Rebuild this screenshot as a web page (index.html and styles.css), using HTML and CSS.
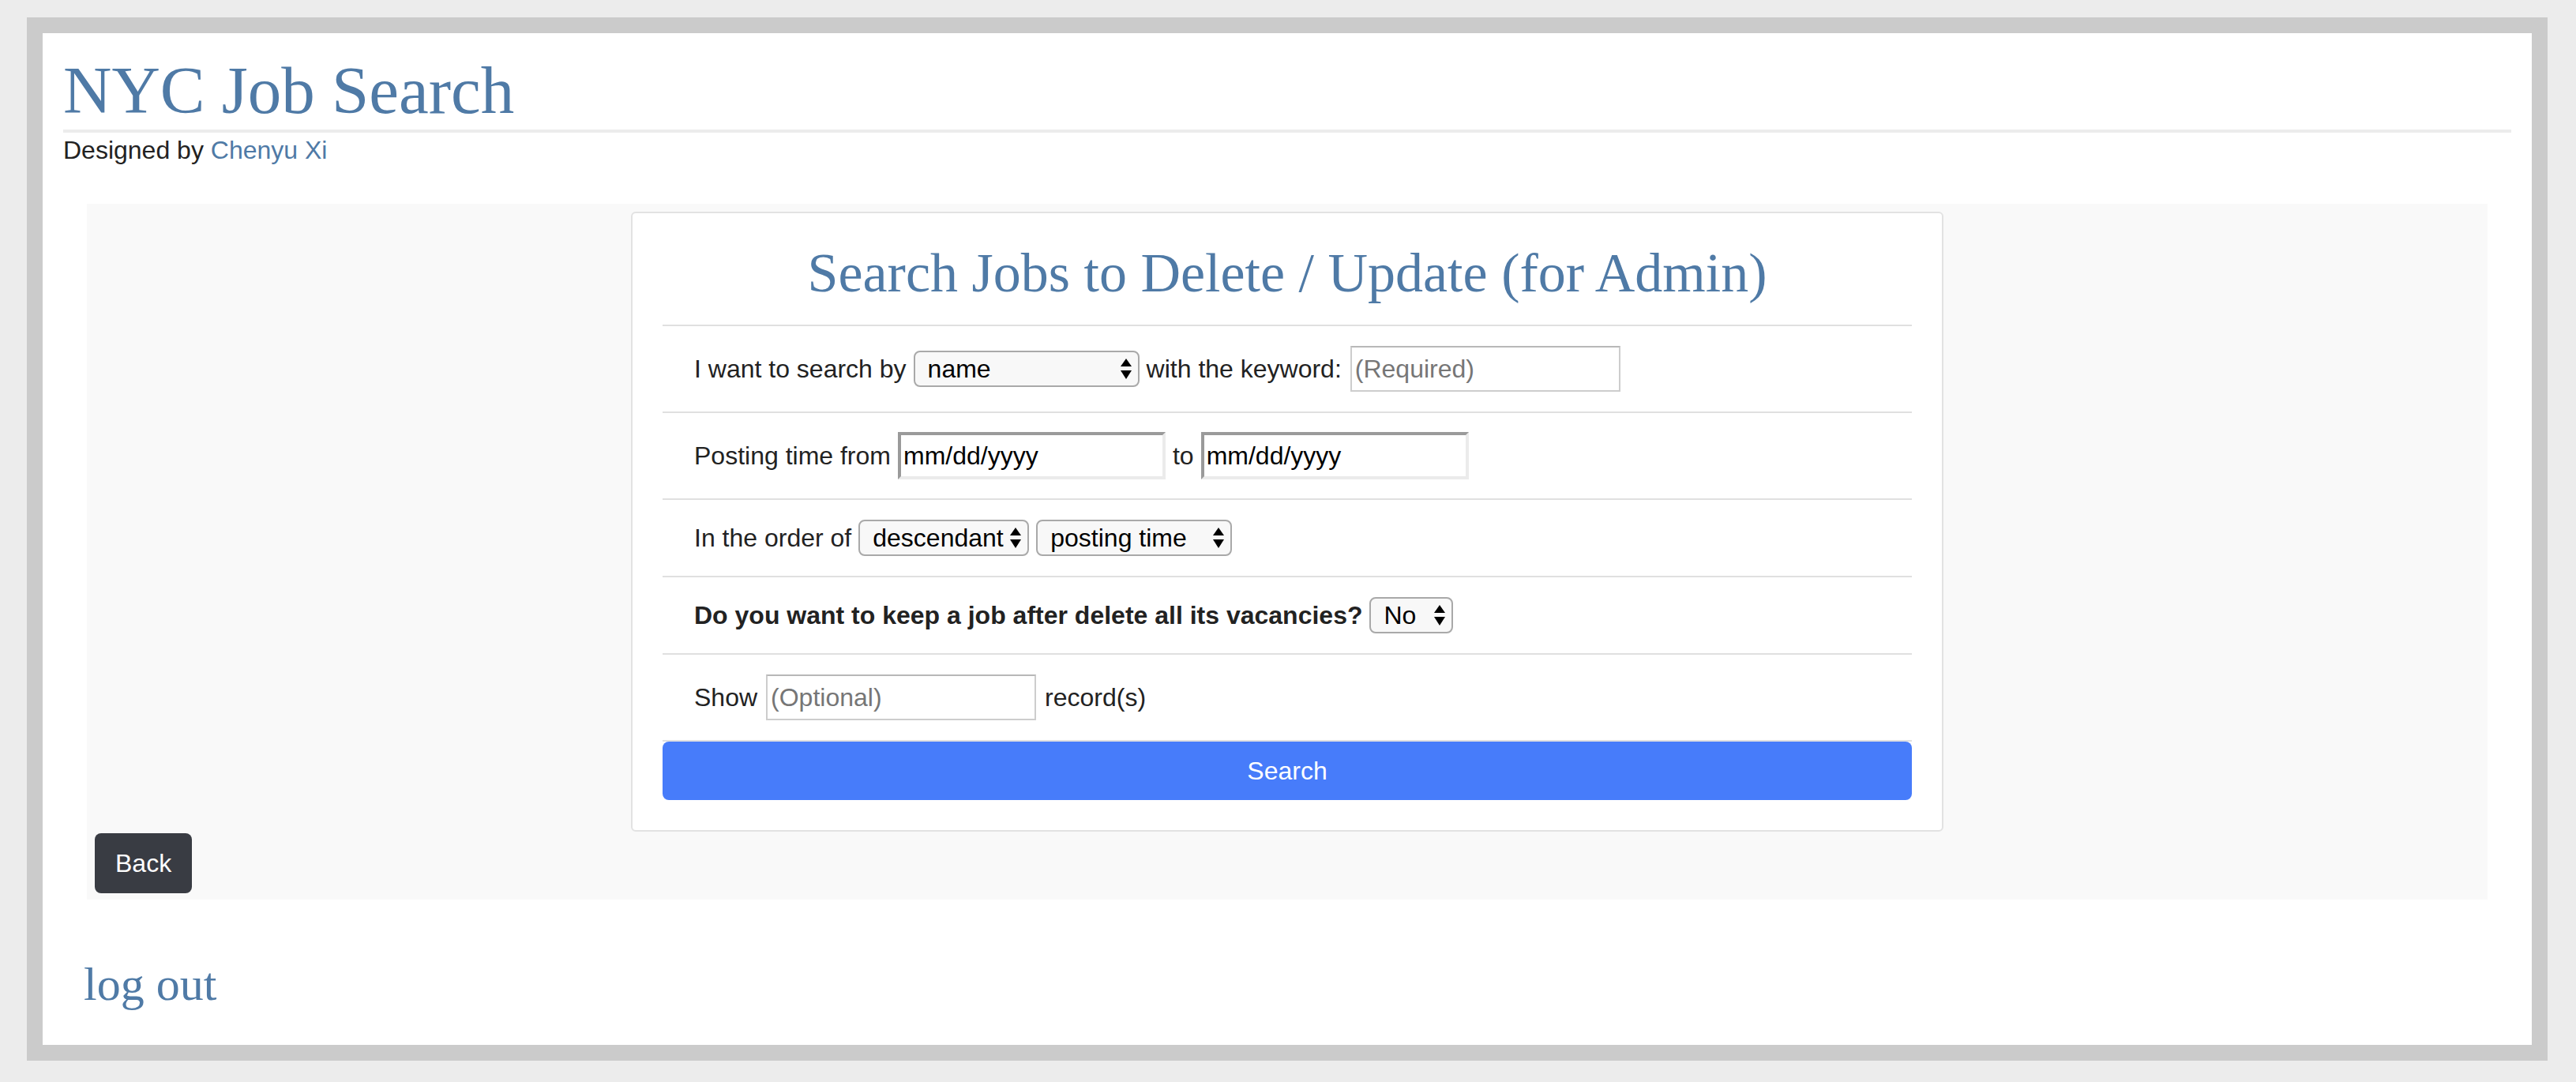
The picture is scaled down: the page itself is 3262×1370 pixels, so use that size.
FILE: index.html
```html
<!DOCTYPE html>
<html lang="en">
<head>
<meta charset="utf-8">
<title>NYC Job Search</title>
<link rel="stylesheet" href="styles.css">
</head>
<body>
<div class="frame">
  <header class="head">
    <h1 class="site-title">NYC Job Search</h1>
    <p class="byline">Designed by <a href="#" class="link">Chenyu Xi</a></p>
  </header>
  <main class="panel">
    <form class="card">
      <h2 class="card-title">Search Jobs to Delete / Update (for Admin)</h2>
      <div class="row">
        <span>I want to search by</span>
        <span class="sel sel-name"><select><option>name</option></select><svg class="arr" viewBox="0 0 14 26" width="14" height="26"><polygon points="7,0 14,10 0,10"/><polygon points="0,15 14,15 7,26"/></svg></span>
        <span>with the keyword:</span>
        <input class="txt" type="text" placeholder="(Required)">
      </div>
      <div class="row row-dates">
        <span>Posting time from</span>
        <input class="date" type="text" value="mm/dd/yyyy">
        <span>to</span>
        <input class="date" type="text" value="mm/dd/yyyy">
      </div>
      <div class="row">
        <span>In the order of</span>
        <span class="sel sel-dir"><select><option>descendant</option></select><svg class="arr" viewBox="0 0 14 26" width="14" height="26"><polygon points="7,0 14,10 0,10"/><polygon points="0,15 14,15 7,26"/></svg></span>
        <span class="sel sel-by"><select><option>posting time</option></select><svg class="arr" viewBox="0 0 14 26" width="14" height="26"><polygon points="7,0 14,10 0,10"/><polygon points="0,15 14,15 7,26"/></svg></span>
      </div>
      <div class="row">
        <strong>Do you want to keep a job after delete all its vacancies?</strong>
        <span class="sel sel-yn"><select><option>No</option></select><svg class="arr" viewBox="0 0 14 26" width="14" height="26"><polygon points="7,0 14,10 0,10"/><polygon points="0,15 14,15 7,26"/></svg></span>
      </div>
      <div class="row">
        <span>Show</span>
        <input class="txt" type="text" placeholder="(Optional)">
        <span>record(s)</span>
      </div>
      <button type="button" class="btn-search">Search</button>
    </form>
    <button type="button" class="btn-back">Back</button>
  </main>
  <a href="#" class="logout">log out</a>
</div>
</body>
</html>
```

FILE: styles.css
```css
html, body {
  margin: 0;
  padding: 0;
}
body {
  background: #ececec;
  font-family: "Liberation Sans", Arial, sans-serif;
  color: #222;
}
.frame {
  box-sizing: border-box;
  width: 3192px;
  margin: 22px 0 0 34px;
  border: 20px solid #cbcbcb;
  background: #fff;
  padding: 23px 26px 42px;
}
.site-title {
  margin: 0;
  font-family: "Liberation Serif", "Times New Roman", serif;
  font-weight: normal;
  font-size: 85px;
  line-height: 99px;
  color: #4f7aa6;
  border-bottom: 4px solid #ececec;
}
.byline {
  margin: 4px 0 0;
  font-size: 32px;
  line-height: 36px;
}
.link {
  color: #4f7aa6;
  text-decoration: none;
}
.panel {
  margin: 50px 30px 0;
  background: #f9f9f9;
  padding: 10px 10px 8px;
}
.card {
  box-sizing: border-box;
  width: 1662px;
  margin: 0 auto;
  background: #fff;
  border: 2px solid #e2e2e2;
  border-radius: 6px;
  padding: 0 38px 38px;
}
.card-title {
  margin: 0;
  padding: 36px 0 25px;
  text-align: center;
  font-family: "Liberation Serif", "Times New Roman", serif;
  font-weight: normal;
  font-size: 70px;
  line-height: 80px;
  color: #4f7aa6;
  border-bottom: 2px solid #e0e0e0;
}
.row {
  display: flex;
  align-items: center;
  gap: 9px;
  padding: 25px 40px;
  border-bottom: 2px solid #e0e0e0;
  font-size: 32px;
  line-height: 42px;
}
.row-dates {
  padding: 24px 40px;
}
.row strong {
  font-weight: bold;
}
.txt {
  box-sizing: border-box;
  width: 342px;
  height: 58px;
  margin: 0 2px;
  border: 2px solid #cdcdcd;
  border-top-color: #b8b8b8;
  padding: 0 4px;
  font: 32px "Liberation Sans", Arial, sans-serif;
  color: #000;
  background: #fff;
  outline: none;
}
.txt::placeholder {
  color: #767676;
}
.date {
  box-sizing: border-box;
  width: 339px;
  height: 60px;
  border-style: solid;
  border-width: 4px;
  border-color: #9a9a9a #ebebeb #ebebeb #9a9a9a;
  padding: 0 3px;
  font: 32px "Liberation Sans", Arial, sans-serif;
  color: #000;
  background: #fff;
  outline: none;
}
.sel {
  position: relative;
  display: inline-block;
  height: 46px;
}
.sel select {
  -webkit-appearance: none;
  appearance: none;
  box-sizing: border-box;
  width: 100%;
  height: 46px;
  border: 2px solid #a9a9a9;
  border-radius: 8px;
  background: #f8f8f8;
  padding: 0 8px 0 16px;
  font: 32px "Liberation Sans", Arial, sans-serif;
  color: #000;
  outline: none;
}
.sel .arr {
  position: absolute;
  right: 10px;
  top: 10px;
  fill: #000;
  pointer-events: none;
}
.sel-name { width: 286px; }
.sel-dir { width: 216px; }
.sel-by { width: 248px; }
.sel-yn { width: 106px; }
.btn-search {
  display: block;
  width: 100%;
  height: 74px;
  border: 0;
  border-radius: 8px;
  background: #477cfa;
  color: #fff;
  font: 32px "Liberation Sans", Arial, sans-serif;
  cursor: pointer;
}
.btn-back {
  display: block;
  margin-top: 2px;
  height: 76px;
  padding: 0 26px;
  border: 0;
  border-radius: 8px;
  background: #393c43;
  color: #fff;
  font: 32px "Liberation Sans", Arial, sans-serif;
  cursor: pointer;
}
.logout {
  display: inline-block;
  margin: 72px 0 0 26px;
  font-family: "Liberation Serif", "Times New Roman", serif;
  font-size: 60px;
  line-height: 70px;
  color: #4f7aa6;
  text-decoration: none;
}
```
